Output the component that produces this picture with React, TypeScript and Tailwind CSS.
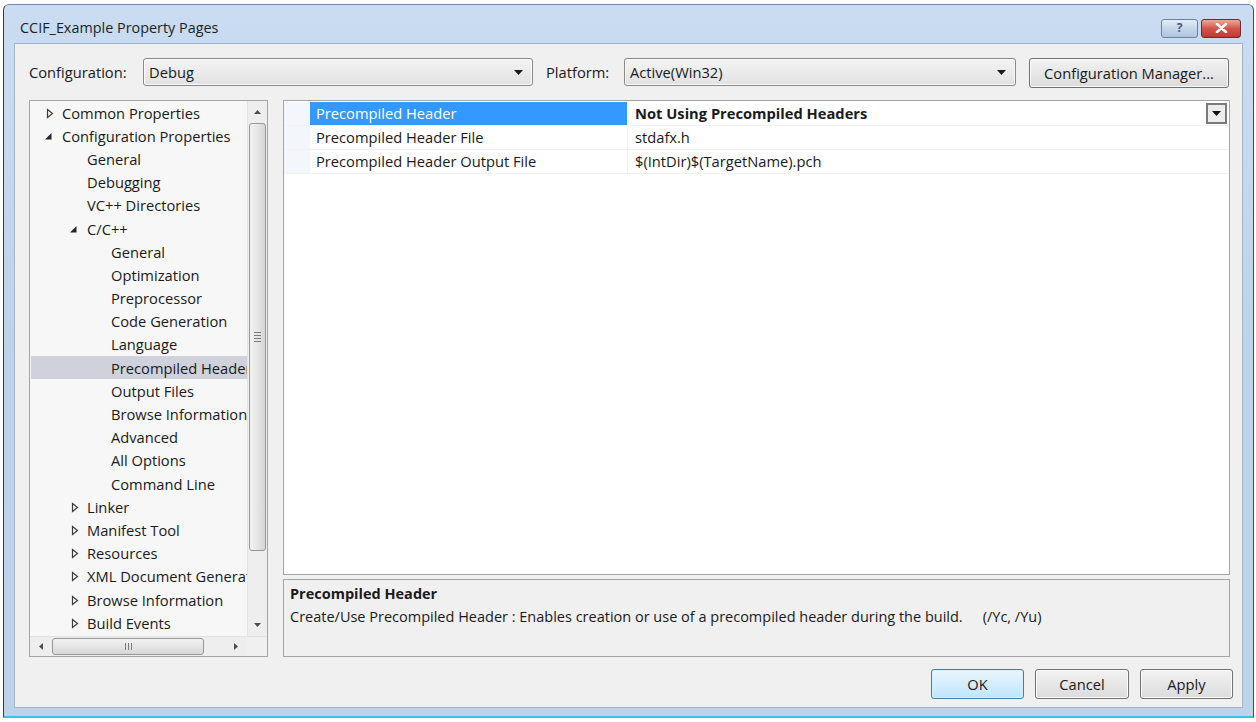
import React from 'react';

const font = { fontFamily: '"Open Sans", "Noto Sans", sans-serif' };

type TreeItem = { label: string; level: number; arrow?: 'open' | 'closed'; selected?: boolean };

const tree: TreeItem[] = [
  { label: 'Common Properties', level: 0, arrow: 'closed' },
  { label: 'Configuration Properties', level: 0, arrow: 'open' },
  { label: 'General', level: 1 },
  { label: 'Debugging', level: 1 },
  { label: 'VC++ Directories', level: 1 },
  { label: 'C/C++', level: 1, arrow: 'open' },
  { label: 'General', level: 2 },
  { label: 'Optimization', level: 2 },
  { label: 'Preprocessor', level: 2 },
  { label: 'Code Generation', level: 2 },
  { label: 'Language', level: 2 },
  { label: 'Precompiled Headers', level: 2, selected: true },
  { label: 'Output Files', level: 2 },
  { label: 'Browse Information', level: 2 },
  { label: 'Advanced', level: 2 },
  { label: 'All Options', level: 2 },
  { label: 'Command Line', level: 2 },
  { label: 'Linker', level: 1, arrow: 'closed' },
  { label: 'Manifest Tool', level: 1, arrow: 'closed' },
  { label: 'Resources', level: 1, arrow: 'closed' },
  { label: 'XML Document Generator', level: 1, arrow: 'closed' },
  { label: 'Browse Information', level: 1, arrow: 'closed' },
  { label: 'Build Events', level: 1, arrow: 'closed' },
];

const indent = ['pl-[31px]', 'pl-[56px]', 'pl-[80px]'];

function Arrow({ kind }: { kind: 'open' | 'closed' }) {
  if (kind === 'closed') {
    return (
      <svg width="9" height="11" viewBox="0 0 9 11" className="absolute left-[-16px] top-[6px]">
        <path d="M1.5 1.5 L6.5 5.5 L1.5 9.5 Z" fill="none" stroke="#3c3c3c" strokeWidth="1.2" />
      </svg>
    );
  }
  return (
    <svg width="9" height="9" viewBox="0 0 9 9" className="absolute left-[-18px] top-[7px]">
      <path d="M7.5 1 L7.5 7.5 L1 7.5 Z" fill="#262626" />
    </svg>
  );
}

function Combo({ value, width }: { value: string; width: string }) {
  return (
    <div
      className={`${width} h-[28px] flex items-center justify-between rounded-[3px] border border-[#8a8a8a] bg-gradient-to-b from-[#f4f4f4] to-[#e2e2e2] pl-[5px] pr-[9px] shadow-[inset_0_0_0_1px_#fbfbfb]`}
    >
      <span>{value}</span>
      <svg width="9" height="5" viewBox="0 0 9 5">
        <path d="M0 0 H9 L4.5 5 Z" fill="#1a1a1a" />
      </svg>
    </div>
  );
}

function Button({ label, width, primary }: { label: string; width: string; primary?: boolean }) {
  return (
    <div
      className={`${width} h-[30px] flex items-center justify-center rounded-[3px] border ${
        primary
          ? 'border-[#3c7fb1] bg-gradient-to-b from-[#eaf6fd] to-[#bee6fd] shadow-[inset_0_0_0_1px_#d8f0fc]'
          : 'border-[#707070] bg-gradient-to-b from-[#f2f2f2] to-[#dcdcdc] shadow-[inset_0_0_0_1px_#fcfcfc]'
      }`}
    >
      {label}
    </div>
  );
}

function VScrollBar() {
  return (
    <div className="w-[20px] flex flex-col bg-[#eeeeee] border-l border-[#e3e3e3]">
      <div className="h-[22px] flex items-center justify-center">
        <svg width="7" height="4" viewBox="0 0 7 4">
          <path d="M0 4 L3.5 0 L7 4 Z" fill="#4d4d4d" />
        </svg>
      </div>
      <div className="h-[428px] mx-[1px] rounded-[3px] border border-[#979797] bg-gradient-to-r from-[#f2f2f2] via-[#e6e6e6] to-[#d6d6d6] flex items-center justify-center">
        <div className="flex flex-col gap-[2px]">
          <div className="w-[7px] h-[1px] bg-[#7a7a7a]" />
          <div className="w-[7px] h-[1px] bg-[#7a7a7a]" />
          <div className="w-[7px] h-[1px] bg-[#7a7a7a]" />
          <div className="w-[7px] h-[1px] bg-[#7a7a7a]" />
        </div>
      </div>
      <div className="flex-1" />
      <div className="h-[22px] flex items-center justify-center">
        <svg width="7" height="4" viewBox="0 0 7 4">
          <path d="M0 0 L7 0 L3.5 4 Z" fill="#4d4d4d" />
        </svg>
      </div>
    </div>
  );
}

function HScrollBar() {
  return (
    <div className="h-[20px] flex bg-[#eeeeee] border-t border-[#e3e3e3]">
      <div className="w-[22px] flex items-center justify-center">
        <svg width="4" height="7" viewBox="0 0 4 7">
          <path d="M4 0 L0 3.5 L4 7 Z" fill="#4d4d4d" />
        </svg>
      </div>
      <div className="w-[152px] my-[1px] rounded-[3px] border border-[#979797] bg-gradient-to-b from-[#f2f2f2] via-[#e6e6e6] to-[#d6d6d6] flex items-center justify-center">
        <div className="flex gap-[2px]">
          <div className="w-[1px] h-[7px] bg-[#7a7a7a]" />
          <div className="w-[1px] h-[7px] bg-[#7a7a7a]" />
          <div className="w-[1px] h-[7px] bg-[#7a7a7a]" />
        </div>
      </div>
      <div className="flex-1" />
      <div className="w-[22px] flex items-center justify-center">
        <svg width="4" height="7" viewBox="0 0 4 7">
          <path d="M0 0 L4 3.5 L0 7 Z" fill="#4d4d4d" />
        </svg>
      </div>
      <div className="w-[20px] bg-[#f0f0f0]" />
    </div>
  );
}

const props = [
  { name: 'Precompiled Header', value: 'Not Using Precompiled Headers', selected: true },
  { name: 'Precompiled Header File', value: 'stdafx.h' },
  { name: 'Precompiled Header Output File', value: '$(IntDir)$(TargetName).pch' },
];

export default function App() {
  return (
    <div className="w-[1256px] h-[722px] bg-white pl-[3px] pr-[2px] pt-[4px] pb-[4px] text-[14.7px] text-[#1a1a1a]" style={font}>
      <div className="h-full flex flex-col border-l border-r border-t border-l-[#3a3a3a] border-r-[#4a4a4a] border-t-[#6d8aa8] border-b-2 border-b-[#33c4e6] bg-gradient-to-b from-[#cadcf1] via-[#bcd3ec] to-[#bcd3ea] rounded-t-[6px]">
        {/* title bar */}
        <div className="h-[38px] flex items-center justify-between pl-[16px] pr-[12px] shrink-0">
          <span className="text-[14.4px] text-[#1e1e1e] pt-[7px]">CCIF_Example Property Pages</span>
          <div className="flex gap-[3px] pt-[8px]">
            <div className="w-[37px] h-[19px] rounded-[3px] border border-[#6d819b] bg-gradient-to-b from-[#e4ecf6] via-[#c5d6ea] to-[#aec4df] flex items-center justify-center text-[12px] font-bold text-[#3f5c80]">
              ?
            </div>
            <div className="w-[40px] h-[19px] rounded-[3px] border border-[#6e2d28] bg-gradient-to-b from-[#e9a99c] via-[#d3544b] to-[#c2392d] flex items-center justify-center">
              <svg width="13" height="10" viewBox="0 0 13 10">
                <path d="M2 1 L11 9 M11 1 L2 9" stroke="#ffffff" strokeWidth="2.6" strokeLinecap="round" />
              </svg>
            </div>
          </div>
        </div>

        {/* client area */}
        <div className="flex-1 mx-[10px] mb-[8px] bg-[#f0f0f0] border border-[#9fb6cf] flex flex-col pl-[14px] pr-[12px]">
          {/* configuration row */}
          <div className="flex items-center mt-[14px] h-[28px]">
            <span className="w-[114px]">Configuration:</span>
            <Combo value="Debug" width="w-[390px]" />
            <span className="ml-[13px] w-[78px]">Platform:</span>
            <Combo value="Active(Win32)" width="w-[392px]" />
            <div className="ml-[13px] mt-[2px]">
              <Button label="Configuration Manager..." width="w-[200px]" />
            </div>
          </div>

          {/* main panels */}
          <div className="flex mt-[14px] h-[557px]">
            {/* tree */}
            <div className="w-[239px] border border-[#a5a5a5] bg-[#f7f7f7] flex flex-col">
              <div className="flex flex-1 min-h-0">
                <div className="flex-1 overflow-hidden pl-[1px]">
                  {tree.map((it, i) => (
                    <div
                      key={i}
                      className={`h-[23.2px] flex items-center whitespace-nowrap ${indent[it.level]} ${
                        it.selected ? 'bg-[#cfd2dd]' : ''
                      }`}
                    >
                      <span className="relative leading-[22px]">
                        {it.arrow && <Arrow kind={it.arrow} />}
                        {it.label}
                      </span>
                    </div>
                  ))}
                </div>
                <VScrollBar />
              </div>
              <HScrollBar />
            </div>

            {/* right side */}
            <div className="flex-1 ml-[15px] flex flex-col">
              <div className="h-[475px] border border-[#a5a5a5] bg-white flex flex-col pt-[1px] pr-[1px]">
                {props.map((p, i) => (
                  <div key={i} className="flex h-[24px] border-b border-[#f2f2f2]">
                    <div className="w-[26px] bg-[#f3f6fa]" />
                    <div
                      className={`w-[318px] pl-[6px] flex items-center border-r border-[#f0f0f0] ${
                        p.selected ? 'bg-[#3399ff] text-white' : ''
                      }`}
                    >
                      {p.name}
                    </div>
                    <div className={`flex-1 pl-[7px] flex items-center justify-between ${p.selected ? 'font-bold' : ''}`}>
                      <span>{p.value}</span>
                      {p.selected && (
                        <div className="w-[21px] h-[21px] border-2 border-[#7a7a7a] bg-[#ececec] flex items-center justify-center mr-[1px]">
                          <svg width="9" height="5" viewBox="0 0 9 5">
                            <path d="M0 0 H9 L4.5 5 Z" fill="#111111" />
                          </svg>
                        </div>
                      )}
                    </div>
                  </div>
                ))}
                <div className="flex-1" />
              </div>
              <div className="mt-[4px] flex-1 border border-[#a5a5a5] bg-[#f0f0f0] px-[6px] pt-[2px] text-[14.5px]">
                <div className="font-bold leading-[23px]">Precompiled Header</div>
                <div className="leading-[23px]">
                  Create/Use Precompiled Header : Enables creation or use of a precompiled header during the build.
                  <span className="ml-[20px]">(/Yc, /Yu)</span>
                </div>
              </div>
            </div>
          </div>

          {/* bottom buttons */}
          <div className="flex justify-end gap-[11px] mt-[12px] -mr-[3px]">
            <Button label="OK" width="w-[93px]" primary />
            <Button label="Cancel" width="w-[94px]" />
            <Button label="Apply" width="w-[93px]" />
          </div>
        </div>
      </div>
    </div>
  );
}
